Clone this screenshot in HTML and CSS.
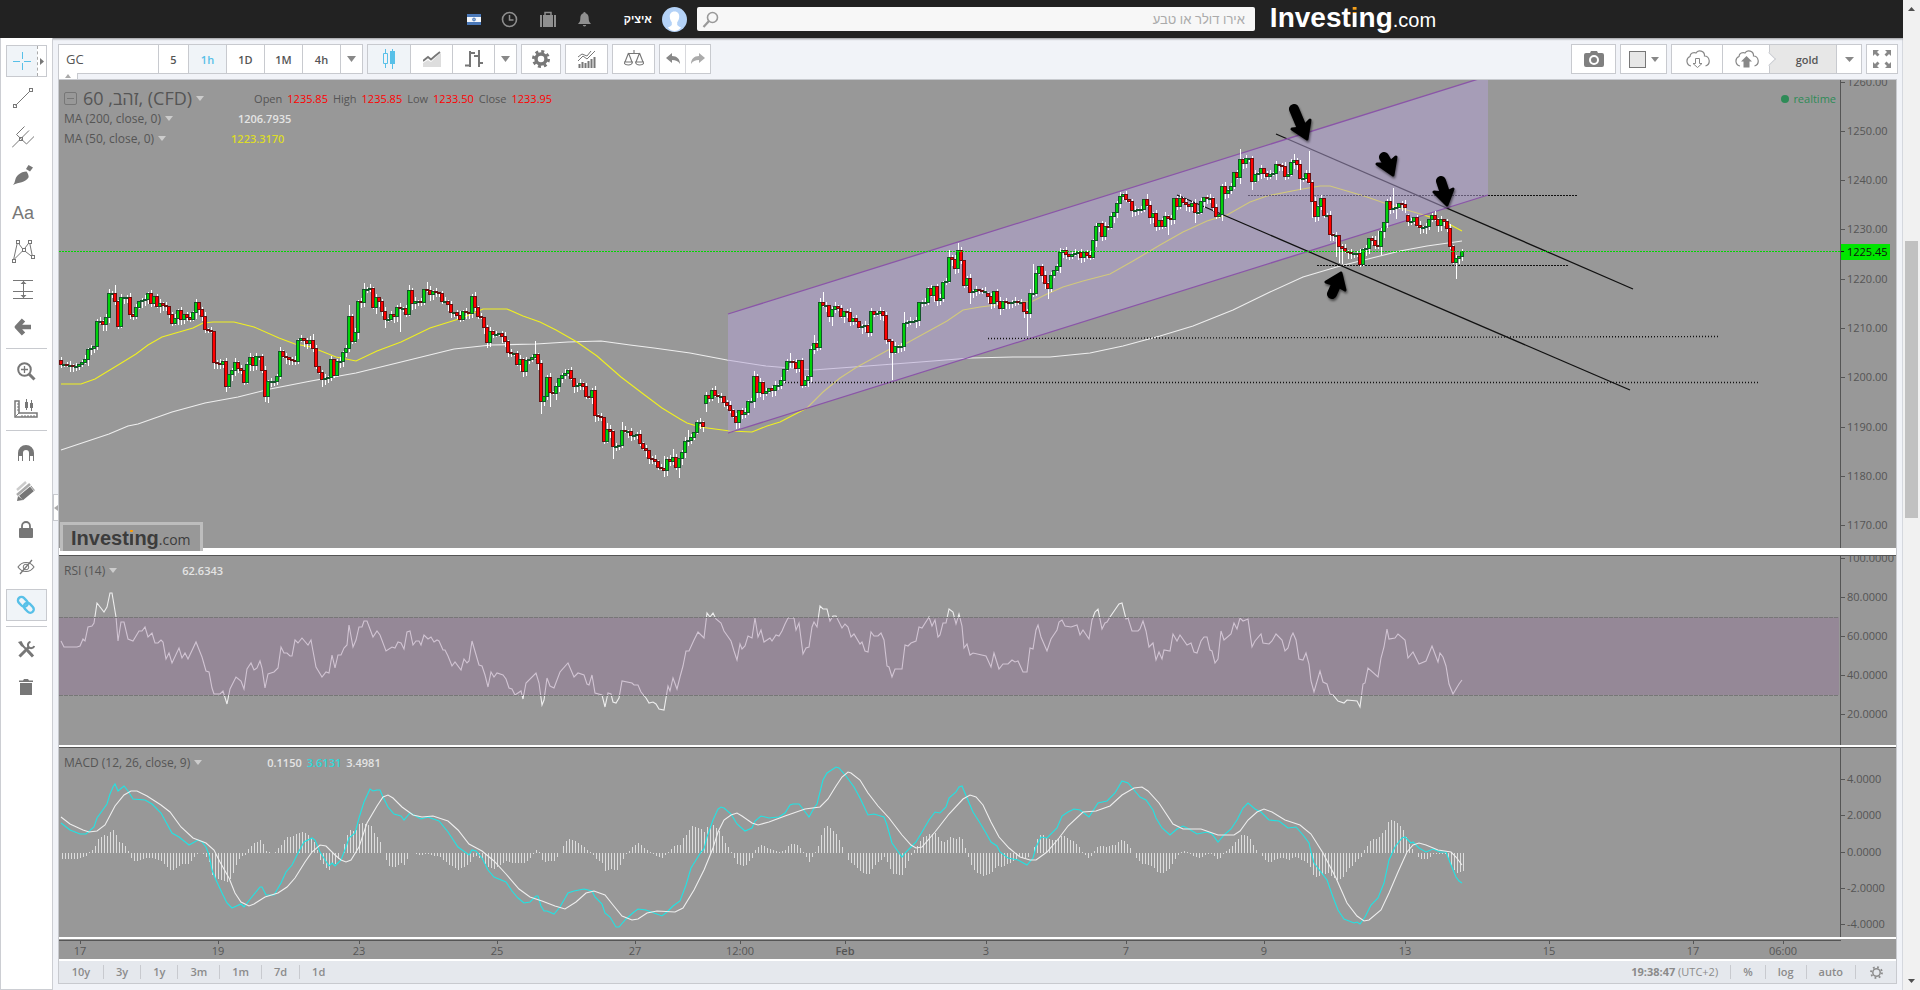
FILE: index.html
```html
<!DOCTYPE html>
<html lang="he">
<head>
  <meta charset="UTF-8">
  <meta name="viewport" content="width=device-width, initial-scale=1.0">
  <title>Investing.com - זהב</title>
  <link rel="stylesheet" href="styles.css">
</head>
<body>
  <div class="page">

    <!-- top bar -->
    <header class="topbar">
      <svg class="flag" width="14" height="11" viewBox="0 0 14 11"><rect width="14" height="11" fill="#f4f7fb"/><rect width="14" height="3" fill="#4a78b8"/><rect y="8" width="14" height="3" fill="#4a78b8"/><path d="M7 3.6l1.6 2.7H5.4zM7 7.4L5.4 4.7h3.2z" fill="none" stroke="#4a78b8" stroke-width=".7"/></svg>
      <a href="#" class="top-icon" aria-label="history"><svg width="17" height="17" viewBox="0 0 17 17"><circle cx="8.500" cy="8.500" r="7" fill="none" stroke="#8f8f8f" stroke-width="1.600"/><path d="M8.500 4v5h4" fill="none" stroke="#8f8f8f" stroke-width="1.500"/></svg></a>
      <a href="#" class="top-icon" aria-label="portfolio"><svg width="18" height="17" viewBox="0 0 18 17"><path d="M6 4V1.500h6V4" fill="none" stroke="#8f8f8f" stroke-width="1.500"/><path d="M1 4h2v12H1zM4 4h10v12H4zM15 4h2v12h-2z" fill="#8f8f8f"/></svg></a>
      <a href="#" class="top-icon" aria-label="alerts"><svg width="15" height="16" viewBox="0 0 15 16"><path d="M7.500 1c-1 0-1.200.8-1.200 1.300C4 3 3.300 5 3.300 7.500c0 2.500-.8 4-2.300 5.500h13c-1.500-1.500-2.300-3-2.300-5.500 0-2.500-.7-4.500-3-5.200C8.700 1.800 8.500 1 7.500 1zM5.800 14h3.400a1.700 1.500 0 0 1-3.400 0z" fill="#8f8f8f"/></svg></a>
      <a href="#" class="user" dir="rtl">איציק</a>
      <svg class="avatar" width="25" height="25" viewBox="0 0 25 25"><circle cx="12.500" cy="12.500" r="12.500" fill="#b4d2f7"/><path d="M12.500 4.500c-3.500 0-5 2.500-4.700 5.500.2 2.500 1 4 2 5.200V18c-1.500 1.800-3 2-4 2.600 2 2.500 4.500 3.400 6.700 3.400s4.700-.9 6.700-3.400c-1-.6-2.500-.8-4-2.600v-2.800c1-1.200 1.800-2.700 2-5.200.3-3-1.200-5.500-4.700-5.500z" fill="#fff"/></svg>
      <form class="search">
        <svg width="17" height="17" viewBox="0 0 17 17"><circle cx="10.500" cy="6.500" r="5" fill="none" stroke="#999" stroke-width="1.600"/><path d="M7 10l-5.500 6" stroke="#999" stroke-width="2.200"/></svg>
        <input type="text" dir="rtl" aria-label="חיפוש" placeholder="אירו דולר או טבע">
      </form>
      <a href="#" class="logo"><b>Invest<span class="dot">i</span>ng</b><span class="com">.com</span></a>
    </header>

    <div class="workspace">

      <!-- drawing tools -->
      <nav class="tools">
        <button class="tool active split" aria-label="crosshair">
          <svg width="18" height="18" viewBox="0 0 18 18"><path d="M0 9.500h7M11 9.500h7M9.500 0v7M9.500 11v7" stroke="#58c0e8" fill="none"/></svg>
          <span class="more"><svg width="4" height="7" viewBox="0 0 4 7"><path d="M0 0l4 3.500L0 7z" fill="#777"/></svg></span>
        </button>
        <button class="tool" aria-label="trend line"><svg width="22" height="22" viewBox="0 0 22 22"><g fill="none" stroke="#777"><path d="M3.500 17.500l14-14"/><rect x="1.500" y="16.500" width="3" height="3"/><rect x="17.500" y=".5" width="3" height="3"/></g></svg></button>
        <button class="tool" aria-label="pitchfork"><svg width="22" height="22" viewBox="0 0 22 22"><g fill="none" stroke="#777"><path d="M0 21.500l7.500-7.500M10 11.500l7-7M4.500 8.500l8-8M4.500 8.500l10 9.500M14.500 18l8-8"/><rect x="7.500" y="11.500" width="3" height="3"/></g></svg></button>
        <button class="tool" aria-label="brush"><svg width="22" height="22" viewBox="0 0 22 22"><path d="M1 21c3-3 1-6 5-10 2.500-2.400 6-3.500 8.500-3.500 1.500 2 2.500 4.500 2 6C13 19 7 18 1 21z M14 5l2.500-4 4.500 2.500-3 4z" fill="#777"/></svg></button>
        <button class="tool text-tool" aria-label="text">Aa</button>
        <button class="tool" aria-label="pattern"><svg width="24" height="24" viewBox="0 0 24 24"><g fill="none" stroke="#777"><path d="M2.500 21l4-18 6 8 6-8 3 15-9-7-10 10"/></g><g fill="#fff" stroke="#777"><rect x="5.500" y="1.500" width="3" height="3"/><rect x="17.500" y="1.500" width="3" height="3"/><rect x="11.500" y="9.500" width="3" height="3"/><rect x="1.500" y="20.500" width="3" height="3"/><rect x="20.500" y="16.500" width="3" height="3"/></g></svg></button>
        <button class="tool" aria-label="price range"><svg width="20" height="20" viewBox="0 0 20 20"><path d="M0 1.500h20M0 12.500h20M0 19.500h20M10.500 2v17" stroke="#777" fill="none"/><path d="M10.500 2l3 3h-6zM10.500 19l3-3h-6z" fill="#777"/></svg></button>
        <button class="tool" aria-label="icons"><svg width="18" height="18" viewBox="0 0 18 18"><path d="M9.500 2L3 9l6.500 7M4 9h13" stroke="#777" stroke-width="4.600" fill="none" stroke-linejoin="round"/></svg></button>
        <hr>
        <button class="tool" aria-label="zoom in"><svg class="shift" width="19" height="19" viewBox="0 0 19 19"><circle cx="7.500" cy="7.500" r="6.300" fill="none" stroke="#777" stroke-width="2"/><path d="M4 7.500h7M7.500 4v7" stroke="#777" stroke-width="1.300"/><path d="M12 12l5.500 5.500" stroke="#777" stroke-width="3"/></svg></button>
        <button class="tool" aria-label="measure"><svg class="shift" width="24" height="20" viewBox="0 0 24 20"><path d="M1 2h4v12h18v4H1z" fill="none" stroke="#777" stroke-width="1.500"/><path d="M3 5h2M3 8h2M3 11h2M8 16v2M11 16v2M14 16v2M17 16v2M20 16v2M1.500 17.500L5 14M12.500 0v11M17.500 1v11" stroke="#777"/><path d="M11 3h3v6h-3zM16 4h3v5h-3z" fill="#777"/></svg></button>
        <hr>
        <button class="tool" aria-label="magnet"><svg class="shift" width="16" height="17" viewBox="0 0 16 17"><path d="M2.500 16V8a5.500 5.500 0 0 1 11 0v8" fill="none" stroke="#777" stroke-width="5"/><path d="M1 11h3v5H1zM12 11h3v5h-3z" fill="#fff"/></svg></button>
        <button class="tool" aria-label="stay in drawing mode"><svg class="shift" width="20" height="20" viewBox="0 0 20 20"><path d="M1 9l9-8" stroke="#ccc" stroke-width="2.500"/><path d="M1 14L14 3" stroke="#aaa" stroke-width="2.500"/><path d="M5 17L17 7" stroke="#777" stroke-width="6"/><path d="M1 20l1-5 5 4z" fill="#777"/><path d="M14 5l5 6" stroke="#fff" stroke-width=".8"/></svg></button>
        <button class="tool" aria-label="lock"><svg class="shift" width="14" height="17" viewBox="0 0 14 17"><path d="M3 8V5a4 4 0 0 1 8 0v3" fill="none" stroke="#777" stroke-width="1.800"/><rect y="7" width="14" height="10" rx="1" fill="#777"/></svg></button>
        <button class="tool" aria-label="hide drawings"><svg class="shift" width="18" height="16" viewBox="0 0 18 16"><path d="M1 8c4-6 12-6 16 0-4 6-12 6-16 0z" fill="none" stroke="#777" stroke-width="1.100"/><circle cx="9" cy="8" r="2.800" fill="none" stroke="#777"/><path d="M3 15L15 1" stroke="#777" stroke-width="1.300"/></svg></button>
        <button class="tool active" aria-label="link"><svg width="20" height="20" viewBox="0 0 20 20"><g fill="none" stroke="#58c0e8" stroke-width="2.400"><rect x="-5" y="-3.500" width="11" height="7" rx="3.500" transform="translate(6.500 6.500) rotate(45)"/><rect x="-5" y="-3.500" width="11" height="7" rx="3.500" transform="translate(12.500 12.500) rotate(45)"/></g></svg></button>
        <hr>
        <button class="tool" aria-label="settings"><svg class="shift" width="17" height="17" viewBox="0 0 17 17"><path d="M3 3l11.500 11.500" stroke="#777" stroke-width="2"/><path d="M9.500 9.500l5.500 6" stroke="#777" stroke-width="3"/><path d="M0 1l3.500-1 2.500 5-2.500.5z" fill="#777"/><path d="M1.500 15.500L11 6" stroke="#777" stroke-width="3"/><path d="M12.500.8a3.200 3.200 0 1 0 3.700 4.200" fill="none" stroke="#777" stroke-width="2"/></svg></button>
        <button class="tool" aria-label="remove"><svg class="shift" width="14" height="16" viewBox="0 0 14 16"><path d="M0 1.500h4L5 0h4l1 1.500h4V3H0zM1 4h12v12H1z" fill="#777"/></svg></button>
        <span class="fold-left"><svg width="4" height="6" viewBox="0 0 4 6"><path d="M4 0L0 3l4 3z" fill="#aaa"/></svg></span>
      </nav>

      <main class="main">
        <!-- chart toolbar -->
        <div class="toolbar">
          <div class="group">
            <input class="symbol" type="text" aria-label="symbol" value="GC">
            <button class="w31">5</button>
            <button class="on">1h</button>
            <button>1D</button>
            <button>1M</button>
            <button>4h</button>
            <button class="caret" aria-label="more intervals"><svg width="9" height="6" viewBox="0 0 9 6"><path d="M0 0h9L4.500 6z" fill="#888"/></svg></button>
          </div>
          <div class="group">
            <button class="on w42" aria-label="candles"><svg width="14" height="20" viewBox="0 0 14 20"><path d="M3.500 0v4M3.500 15v4M10.500 0v3M10.500 15v5" stroke="#58c0e8"/><path d="M1.500 4.500h4v10h-4z" stroke="#58c0e8" fill="none"/><path d="M8 2h5v13H8z" fill="#58c0e8"/></svg></button>
            <button class="w42" aria-label="area"><svg width="18" height="16" viewBox="0 0 18 16"><path d="M0 12l5-3 3 2 6-6 4-3v14H0z" fill="#ddd"/><path d="M0 10l5-4 3 2.500L12 5l5-4" fill="none" stroke="#777" stroke-width="1.800"/></svg></button>
            <button class="w42" aria-label="bars"><svg width="18" height="18" viewBox="0 0 18 18"><path d="M0 15.500h4M5 1v16M5 3h5M9 6h4M14 0v17M14 13h4" fill="none" stroke="#777" stroke-width="2"/></svg></button>
            <button class="caret" aria-label="more styles"><svg width="9" height="6" viewBox="0 0 9 6"><path d="M0 0h9L4.500 6z" fill="#888"/></svg></button>
          </div>
          <div class="group"><button aria-label="properties"><svg width="18" height="18" viewBox="0 0 18 18"><circle cx="9" cy="9" r="5" fill="none" stroke="#777" stroke-width="3.500"/><circle cx="9" cy="9" r="7.600" fill="none" stroke="#777" stroke-width="2.800" stroke-dasharray="3 2.970"/></svg></button></div>
          <div class="group"><button class="w41" aria-label="indicators"><svg width="18" height="18" viewBox="0 0 18 18"><path d="M1.500 18v-4M4.500 18v-6M7.500 18v-5M10.500 18v-7M13.500 18V9M16.500 18V7" stroke="#777" stroke-width="2"/><path d="M0 11l5-5 4 3 8-8M0 7l4-3 5 2 4-5" fill="none" stroke="#777"/></svg></button></div>
          <div class="group"><button class="w41" aria-label="compare"><svg width="20" height="18" viewBox="0 0 20 18"><path d="M4 3.500h12M10 0v4M4.500 3L1 12M4.500 3L8 12M15.500 3L12 12M15.500 3L19 12M0 12h8.500c-.5 4-8 4-8.500 0zM11.500 12H20c-.5 4-8 4-8.500 0z" fill="none" stroke="#777" stroke-width="1.100"/></svg></button></div>
          <div class="group">
            <button class="w25" aria-label="undo"><svg width="14" height="12" viewBox="0 0 14 12"><path d="M6 0v3c5 0 8 3 8 8-2-3-4-4-8-4v3L0 5z" fill="#888"/></svg></button>
            <button class="w25 faded" aria-label="redo"><svg width="14" height="12" viewBox="0 0 14 12"><path d="M8 0v3C3 3 0 6 0 11c2-3 4-4 8-4v3l6-5z" fill="#888"/></svg></button>
          </div>

          <div class="spacer"></div>

          <div class="group"><button class="w43" aria-label="snapshot"><svg width="20" height="16" viewBox="0 0 20 16"><path d="M2 2h4l1-2h6l1 2h4q2 0 2 2v10q0 2-2 2H2q-2 0-2-2V4q0-2 2-2z" fill="#808080"/><circle cx="10" cy="9" r="4" fill="none" stroke="#fff" stroke-width="2"/></svg></button></div>
          <div class="group"><button class="w45" aria-label="background"><span class="swatch"></span><svg width="8" height="5" viewBox="0 0 8 5"><path d="M0 0h8L4 5z" fill="#888"/></svg></button></div>
          <div class="group">
            <button class="w50" aria-label="load"><svg width="27" height="18" viewBox="0 0 27 18"><path d="M7 16a5 5 0 0 1-1-9.500C6 3 10 2 12 3c2-4 9-2 8.500 3 5 0 7 8 1 10" fill="none" stroke="#888" stroke-width="1.200"/><path d="M11.500 8.500h4v5h2.500l-4.500 4-4.500-4h2.500z" fill="#fff" stroke="#888"/></svg></button>
            <button class="w47 save" aria-label="save"><svg width="27" height="18" viewBox="0 0 27 18"><path d="M7 16a5 5 0 0 1-1-9.500C6 3 10 2 12 3c2-4 9-2 8.500 3 5 0 7 8 1 10" fill="none" stroke="#888" stroke-width="1.200"/><path d="M10.500 17.500v-6H8L13.500 6l5.500 5.500h-2.500v6z" fill="#888"/></svg></button>
            <button class="layout">gold</button>
            <button class="w25" aria-label="more layouts"><svg width="9" height="5" viewBox="0 0 9 5"><path d="M0 0h9L4.500 5z" fill="#888"/></svg></button>
          </div>
          <div class="group"><button class="w31" aria-label="full screen"><svg width="18" height="18" viewBox="0 0 18 18"><g fill="#888"><path d="M0 0h6L4 2l2.500 2.500-2 2L2 4 0 6zM18 0v6l-2-2-2.500 2.500-2-2L14 2l-2-2zM0 18v-6l2 2 2.500-2.500 2 2L4 16l2 2zM18 18h-6l2-2-2.500-2.500 2-2L16 14l2-2z"/></g></svg></button></div>
          <span class="fold-up"><svg width="6" height="4" viewBox="0 0 6 4"><path d="M0 4l3-4 3 4z" fill="#aaa"/></svg></span>
        </div>

        <!-- chart panes -->
        <div class="chart">
          <section class="pane price">
            <svg class="plot" id="pricePlot"></svg>
            <svg class="axis" id="priceAxis"></svg>
            <div class="legend">
              <div class="row title">
                <span class="minus"></span><span class="name">זהב, 60, (CFD)</span><i class="tri"></i>
                <dl>
                  <dt>Open</dt><dd>1235.85</dd>
                  <dt>High</dt><dd>1235.85</dd>
                  <dt>Low</dt><dd>1233.50</dd>
                  <dt>Close</dt><dd>1233.95</dd>
                </dl>
              </div>
              <div class="row"><span class="study-name">MA (200, close, 0)</span><i class="tri"></i><b>1206.7935</b></div>
              <div class="row"><span class="study-name">MA (50, close, 0)</span><i class="tri"></i><b class="yellow">1223.3170</b></div>
            </div>
            <div class="realtime">realtime</div>
            <div class="watermark"><b>Invest<span class="dot">i</span>ng</b><span class="com">.com</span></div>
          </section>
          <section class="pane study">
            <svg class="plot" id="rsiPlot"></svg>
            <svg class="axis" id="rsiAxis"></svg>
            <div class="legend"><div class="row"><span class="study-name">RSI (14)</span><i class="tri"></i><b>62.6343</b></div></div>
          </section>
          <section class="pane study">
            <svg class="plot" id="macdPlot"></svg>
            <svg class="axis" id="macdAxis"></svg>
            <div class="legend"><div class="row"><span class="study-name">MACD (12, 26, close, 9)</span><i class="tri"></i><b>0.1150</b><b class="cyan">3.6131</b><b>3.4981</b></div></div>
          </section>
          <svg class="times" id="timeAxis"></svg>
          <footer class="ranges">
            <button>10y</button><button>3y</button><button>1y</button><button>3m</button><button>1m</button><button>7d</button><button>1d</button>
            <div class="spacer"></div>
            <span class="clock"><b>19:38:47</b> (UTC+2)</span>
            <button>%</button><button>log</button><button>auto</button>
            <button aria-label="scale settings"><svg width="13" height="13" viewBox="0 0 13 13"><circle cx="6.500" cy="6.500" r="3.700" fill="none" stroke="#8b8b8b" stroke-width="1.500"/><circle cx="6.500" cy="6.500" r="5.500" fill="none" stroke="#8b8b8b" stroke-width="1.800" stroke-dasharray="1.800 2.520"/></svg></button>
          </footer>
        </div>
      </main>
    </div>
  </div>

  <div class="scrollbar">
    <svg width="7" height="4" viewBox="0 0 7 4"><path d="M0 4l3.500-4L7 4z" fill="#505050"/></svg>
    <div class="thumb"></div>
    <svg width="7" height="4" viewBox="0 0 7 4"><path d="M0 0h7L3.500 4z" fill="#505050"/></svg>
  </div>

  <script src="chart.js"></script>
</body>
</html>
```
FILE: styles.css
```css
* {
  box-sizing: border-box;
}

body {
  margin: 0;
  display: flex;
  min-height: 100vh;
  background: #f1f3f8;
  font-family: "Trebuchet MS", "Open Sans", "Liberation Sans", sans-serif;
  font-size: 11px;
  color: #555;
}

button {
  margin: 0;
  padding: 0;
  border: 0;
  background: none;
  font: inherit;
  color: inherit;
  display: flex;
  align-items: center;
  justify-content: center;
  cursor: pointer;
}

a {
  text-decoration: none;
}

.page {
  flex: 1;
  min-width: 0;
  display: flex;
  flex-direction: column;
  border-right: 1px solid #d5d8de;
}

.spacer {
  flex: 1;
}

/* top bar */
.topbar {
  height: 38px;
  margin-right: -1px;
  background: #222;
  display: flex;
  align-items: center;
  justify-content: center;
  box-shadow: 0 1px 2px rgba(0, 0, 0, 0.4);
  font-family: "Liberation Sans", sans-serif;
}
.topbar svg {
  display: block;
}
.flag {
  margin-right: 20px;
}
.top-icon {
  width: 38px;
}
.user {
  width: 47px;
  padding-right: 10px;
  text-align: right;
  color: #fff;
  font-size: 11px;
  font-weight: bold;
}
.avatar {
  margin-right: 10px;
}
.search {
  width: 558px;
  height: 24px;
  padding: 0 10px 0 5px;
  display: flex;
  align-items: center;
  background: #f7f7f7;
  border-radius: 2px;
}
.search input {
  flex: 1;
  min-width: 0;
  border: 0;
  padding: 0;
  background: none;
  font: 13px "Liberation Sans", sans-serif;
  outline: none;
}
.search input::placeholder {
  color: #aaa;
}
.logo {
  margin-left: 15px;
  color: #fff;
  font-size: 28px;
  line-height: 38px;
  white-space: nowrap;
}
.logo b,
.watermark b {
  font-family: "Liberation Sans", sans-serif;
}
.logo .com {
  font-size: 20px;
}
.dot {
  background: linear-gradient(#f7a11a 34%, #fff 34%);
  background-clip: text;
  -webkit-background-clip: text;
  color: transparent;
}

.workspace {
  flex: 1;
  display: flex;
}

/* drawing tools */
.tools {
  position: relative;
  width: 53px;
  padding: 4px 5px;
  display: flex;
  flex-direction: column;
  background: #fff;
  border: 1px solid #ccced3;
  border-top: 0;
}
.tool {
  width: 41px;
  height: 32px;
  margin: 3px 0;
  padding-right: 7px;
}
.tool.active {
  background: #f0f4f8;
  border: 1px solid #c8cacf;
  padding-right: 1px;
}
.tool.split {
  padding: 0;
}
.tool.split > svg {
  flex: none;
  margin: 0 6px;
}
.more {
  flex: 1;
  height: 30px;
  background: #fff;
  border-left: 1px dashed #aaa;
  display: flex;
  align-items: center;
  justify-content: center;
}
.shift {
  margin-left: 6px;
}
.text-tool {
  font: 18px "Liberation Sans", sans-serif;
  color: #777;
}
.tools hr {
  width: 100%;
  margin: 2px 0 3px;
  border: 0;
  border-top: 1px solid #c8cacf;
}
.fold-left {
  position: absolute;
  left: 52px;
  top: 456px;
  width: 6px;
  height: 27px;
  background: #fff;
  border: 1px solid #c8cacf;
  display: flex;
  align-items: center;
}

/* chart toolbar */
.main {
  flex: 1;
  min-width: 0;
  margin-left: 5px;
  display: flex;
  flex-direction: column;
}
.toolbar {
  position: relative;
  display: flex;
  gap: 4px;
  padding: 6px 4px 5px 0;
  font-weight: 600;
}
.group {
  height: 30px;
  display: flex;
  background: #fff;
  border: 1px solid #c8cacf;
}
.group > * + * {
  border-left: 1px solid #c8cacf;
}
.group button {
  width: 38px;
}
.group .symbol {
  width: 99px;
  border: 0;
  padding: 0 7px;
  font: 13px "Trebuchet MS", "Open Sans", sans-serif;
  color: #555;
}
.group .on {
  background: #f0f4f8;
  color: #58c0e8;
}
.group .caret {
  width: 22px;
}
.group .w25 {
  width: 25px;
}
.group .w31 {
  width: 30px;
}
.group .w41 {
  width: 41px;
}
.group .w42 {
  width: 42px;
}
.group .w43 {
  width: 43px;
}
.group .w45 {
  width: 45px;
  gap: 5px;
}
.group .w50 {
  width: 50px;
}
.group .w47 {
  width: 47px;
}
.group .layout {
  width: 67px;
  padding-left: 8px;
  background: #e7e7e7;
}
.save {
  position: relative;
}
/* notch pointing at the layout name */
.save::after {
  content: "";
  position: absolute;
  right: -5px;
  top: 9px;
  width: 9px;
  height: 9px;
  background: #fff;
  border: solid #c8cacf;
  border-width: 1px 1px 0 0;
  transform: rotate(45deg);
}
.faded {
  opacity: 0.7;
}
.swatch {
  width: 17px;
  height: 17px;
  background: #e7e7e7;
  border: 1px solid #777;
}
.fold-up {
  position: absolute;
  left: 0;
  bottom: 0;
  width: 20px;
  height: 6px;
  background: #fff;
  border-right: 1px solid #c8cacf;
  border-left: 1px solid #c8cacf;
  display: flex;
  align-items: center;
  justify-content: center;
}

/* chart */
.chart {
  margin: 0 5px 5px 0;
  border: 1px solid #c8cacf;
  background: #fff;
}
.chart svg {
  display: block;
}
.pane {
  position: relative;
  display: flex;
  background: #989898;
}
.plot {
  flex: 1;
  min-width: 0;
  height: 100%;
}
.axis {
  width: 56px;
  height: 100%;
  border-left: 1px solid #555;
}
.price {
  height: 468px;
  margin-bottom: 7px;
}
.study {
  height: 190px;
  margin-bottom: 2px;
  border-top: 1px solid #555;
}
.times {
  width: 100%;
  height: 20px;
  background: #989898;
}
.chart text {
  font: 11px "Trebuchet MS", "Open Sans", sans-serif;
  fill: #555;
}

.legend {
  position: absolute;
  left: 5px;
  top: 4px;
  white-space: nowrap;
}
.price .legend {
  top: 8px;
}
.row {
  height: 20px;
  display: flex;
  align-items: center;
}
.title .name {
  font-family: "Trebuchet MS", "Open Sans", "DejaVu Sans", sans-serif;
  font-size: 18px;
  line-height: 20px;
}
.study-name {
  font-size: 12px;
}
.minus {
  width: 13px;
  height: 13px;
  margin-right: 6px;
  padding: 5px 2px;
  background: linear-gradient(#777, #777) content-box;
  border: 1px solid #777;
  border-radius: 2px;
}
.tri {
  margin: 0 65px 0 4px;
  border: solid transparent;
  border-width: 5px 4px 0;
  border-top-color: #ccc;
}
.title .tri {
  margin-right: 50px;
}
.row b {
  margin-right: 5px;
  color: #e4e4e4;
  font-weight: 600;
}
.row .yellow {
  color: #dcdc28;
}
.row .cyan {
  color: #30d8d8;
}
dl,
dd {
  margin: 0;
}
dl {
  display: flex;
}
dt {
  margin-right: 5px;
}
dd {
  margin-right: 5px;
  color: #f00;
}
.realtime {
  position: absolute;
  right: 60px;
  top: 11px;
  color: #2e8b57;
  display: flex;
  align-items: center;
}
.realtime::before {
  content: "";
  width: 8px;
  height: 8px;
  margin-right: 4px;
  border-radius: 50%;
  background: #2e8b57;
}
.watermark {
  position: absolute;
  left: 1px;
  top: 442px;
  width: 143px;
  height: 29px;
  padding-left: 8px;
  line-height: 25px;
  background: #989898;
  border: 3px solid #bdbdbd;
  border-bottom: 0;
  color: #3c3c3c;
  font-size: 20px;
}
.watermark .com {
  font-size: 14px;
}
.watermark .dot {
  background-image: linear-gradient(#ff9d00 32%, #3c3c3c 32%);
}

/* bottom bar */
.ranges {
  height: 22px;
  margin-top: 2px;
  display: flex;
  align-items: center;
  background: #e5e8ed;
  color: #8b8b8b;
}
.ranges > * {
  height: 14px;
  padding: 0 12px;
  line-height: 14px;
}
.ranges button {
  min-width: 37px;
  font-weight: 600;
}
.ranges button + button,
.clock + button {
  border-left: 1px solid #c8cacf;
}
.ranges button:first-child {
  min-width: 44px;
}
.ranges .clock + button {
  min-width: 34px;
}
.ranges button:last-child {
  min-width: 41px;
}

/* page scrollbar */
.scrollbar {
  width: 17px;
  padding: 7px 2px;
  background: #f1f1f1;
  display: flex;
  flex-direction: column;
  align-items: center;
}
.thumb {
  flex: 0 0 auto;
  width: 13px;
  height: 28vh;
  margin: 230px 0 auto;
  background: #c1c1c1;
}
```
FILE: chart.js
```js
const NS = 'http://www.w3.org/2000/svg';
const LEFT = 59;   // x of the first plot column
const STEP = 3;    // px per bar
const FIRST = 62;  // x of the first bar

function add(parent, tag, attrs, text) {
  const el = document.createElementNS(NS, tag);
  for (const k in attrs) el.setAttribute(k, attrs[k]);
  if (text !== undefined) el.textContent = text;
  parent.appendChild(el);
  return el;
}

// every plot shares one coordinate system, top is the y of the pane
function plot(id, top) {
  return add(document.getElementById(id), 'g', { transform: `translate(${-LEFT},${-top})` });
}

function parse(s) {
  return s.trim().split(/\s+/).map(p => p.split(',').map(Number));
}

function line(g, s, color) {
  return add(g, 'polyline', { points: s.trim(), fill: 'none', stroke: color, 'stroke-width': 1.1 });
}

function valueAt(pts, x) {
  for (let i = 1; i < pts.length; i++) {
    if (x <= pts[i][0]) {
      const [x0, y0] = pts[i - 1], [x1, y1] = pts[i];
      return y0 + (y1 - y0) * (x - x0) / (x1 - x0);
    }
  }
  return pts[pts.length - 1][1];
}

function axis(id, top, labels) {
  const svg = document.getElementById(id);
  labels.forEach(([y, text]) => {
    add(svg, 'path', { d: `M0 ${y - top + .5}h4`, stroke: '#555' });
    add(svg, 'text', { x: 6, y: y - top + 4 }, text);
  });
}

/* ---- data: x,close[,open] ---- */
const closes = parse(`
62,365,361 65,365 68,366 72,366 75,367 78,367 82,363 87,360 90,350 93,349 96,347 98,322 101,322 105,325 108,318 111,294 114,294 117,302 120,327 123,298 127,298 130,315 134,317
138,308 141,302 146,300 149,294 152,304 155,297 158,307 161,304 166,307 168,320 171,315 174,324 179,311 183,320 185,315 191,320 194,313 198,303 201,310 204,317
207,330 211,332 213,353 216,363 222,365 225,362 228,387 231,375 237,363 240,369 243,371 246,383 249,365 252,358 255,366 258,357 261,357 264,371 267,397 270,382
276,382 279,377 282,352 285,357 291,360 295,362 297,342 303,339 309,344 312,341 315,349 318,367 321,373 324,380 330,378 333,360 336,376 339,362 342,362 345,353
348,349 351,317 354,342 357,333 360,302 363,303 366,290 370,289 372,297 375,308 378,298 381,302 384,312 387,320 390,320 393,315 396,317 399,308 403,309 406,315
408,293 411,291 414,304 417,302 423,303 426,290 429,291 432,295 435,292 441,294 444,302 447,302 450,305 453,313 456,313 461,320 465,312 470,314 473,297 477,308
480,317 483,318 486,328 489,343 492,332 495,335 499,334 504,337 507,342 510,353 514,354 516,362 519,365 522,360 525,372 528,361 534,358 537,355 540,364 543,402
546,397 549,378 552,393 555,394 558,387 561,379 564,376 570,371 573,379 576,387 581,384 585,387 588,397 591,398 594,391 597,416 603,418 606,442 609,430 612,432
615,447 618,447 621,446 624,431 628,432 633,436 638,435 642,444 645,449 648,451 651,459 657,462 660,468 666,471 669,460 672,462 675,458 678,468 681,459 684,453
687,442 690,441 695,433 698,423 701,423 704,427 707,396,404 710,399 713,391 716,396 722,397 725,403 728,406 731,411 734,417 738,423 741,411 744,415 747,413 750,402
753,402 756,377 759,393 762,383 765,394 771,389 774,391 777,386 780,386 783,381 786,370 789,362 795,363 798,369 801,361 804,386 807,381 810,377 813,350 816,344
819,348 822,303 825,306 828,306 831,317 834,310 837,307 840,309 843,317 846,312 849,313 852,322 855,319 858,322 861,328 865,326 868,333 870,333 873,312 876,315
881,312 884,316 887,340 891,342 894,353 897,347 902,347 906,324 910,322 918,321 921,303 926,303 929,289 932,296 935,287 938,301 942,299 945,283 948,282 951,258
954,260 957,269 960,251 963,261 966,286 969,279 972,293 977,290 982,292 987,292 990,297,294 993,304 996,292 999,302 1002,309 1005,302 1010,304 1016,302 1022,303
1025,312 1028,314 1031,294 1034,294 1037,274 1040,267 1043,276 1046,284 1049,289 1052,276 1055,271 1058,267 1061,253 1064,251 1067,255 1070,257 1075,254 1079,253
1082,258 1085,253 1091,258 1094,241 1097,227 1100,224 1103,237 1106,227 1109,228 1112,217 1115,213 1118,204 1121,197 1124,195 1127,200 1130,202 1133,211 1139,210
1142,210 1145,200 1148,206 1151,218 1154,214 1157,227 1160,221 1163,227 1166,217 1172,220 1175,199 1178,207 1181,199 1185,203 1189,207 1193,204 1196,213 1199,213
1202,202 1205,198 1210,199 1212,208 1215,208 1218,217 1221,215 1223,187 1226,194 1229,191 1232,187 1235,173 1238,178 1241,160 1244,164 1247,159 1250,159 1253,182
1256,175 1259,174 1262,169 1265,174 1268,177 1273,174 1276,165 1283,167 1286,177 1289,175 1292,163 1295,161 1298,165 1301,179 1304,179 1307,174 1310,183 1313,202
1316,217 1319,207 1322,199 1325,216 1328,216 1331,235 1336,236 1338,241 1341,247 1344,249 1347,252 1352,254 1359,254 1361,265 1364,250 1367,249 1370,239 1373,241
1376,246 1379,247 1382,232 1385,223 1388,202 1391,210 1397,208 1400,204 1403,205 1406,208 1409,222,216 1412,222 1415,218 1418,226 1421,228 1427,227 1430,220 1433,216
1436,220 1439,226 1442,220 1445,222 1448,229 1451,247 1454,263 1457,259 1460,257 1463,252`);

// long wicks: bar x -> y reached
const spikes = {
  98: 320, 104: 331, 117: 285, 111: 289, 228: 392, 267: 402, 270: 401, 315: 334, 324: 387, 351: 305, 366: 283, 387: 328, 402: 332, 411: 285, 429: 282, 477: 292,
  537: 341, 543: 414, 552: 407, 597: 422, 609: 423, 615: 459, 624: 422, 666: 456, 675: 449, 681: 478, 690: 430, 708: 412, 738: 427, 756: 371, 765: 400, 792: 353,
  816: 335, 825: 292, 834: 326, 885: 312, 891: 358, 894: 380, 906: 312, 951: 250, 960: 243, 972: 304, 1002: 315, 1029: 336, 1035: 264, 1050: 299, 1122: 193,
  1149: 194, 1158: 229, 1170: 235, 1197: 223, 1242: 149, 1254: 190, 1296: 154, 1302: 190, 1311: 151, 1314: 218, 1338: 257, 1341: 263, 1344: 264, 1362: 267,
  1380: 231, 1383: 255, 1395: 188, 1398: 219, 1428: 234, 1458: 279, 1323: 195
};

const ma200 = `61,450 79,444 109,434 128,426 138,424 172,412 205,403 238,397 270,389 311,381 356,373 397,363 454,349 491,345 536,344 568,342 601,341 630,345 654,348
690,353 727,360 766,366 813,370 867,366 907,363 933,361 970,358 1013,357 1050,357 1090,353 1123,346 1160,336 1193,326 1233,310 1270,292 1303,277 1340,266 1360,261
1380,256 1400,251 1427,246 1462,241`;
const ma50 = `61,384 81,384 95,379 123,362 136,354 148,345 162,337 193,328 203,323 213,322 234,322 254,327 279,338 295,344 311,347 336,357 356,361 377,351 401,342 430,328
462,318 483,309 507,309 523,316 540,322 556,330 577,342 597,356 621,377 642,393 662,408 680,419 687,423 700,427 730,431 752,432 767,426 780,422 807,408 823,392
840,378 857,367 890,349 907,343 927,332 947,321 963,310 980,307 1013,303 1033,301 1047,294 1063,287 1083,281 1110,274 1133,261 1160,245 1183,232 1207,221 1227,215
1250,202 1267,196 1297,190 1320,186 1330,186 1347,191 1367,197 1390,205 1427,216 1447,223 1462,231`;

const rsi = `61,641 64,647 77,647 80,646 83,639 85,641 88,627 92,626 94,623 97,603 104,612 107,607 110,593 112,593 116,617 118,641 121,622 124,622 128,639 133,641 139,631
142,631 145,627 148,637 152,633 155,643 158,643 161,640 163,642 166,659 169,653 172,663 179,648 182,658 185,653 188,659 196,642 202,657 206,671 209,672 212,688
214,694 220,694 223,691 227,704 230,689 236,677 241,681 244,689 247,669 251,663 254,670 257,668 260,661 262,668 265,688 268,674 274,672 278,668 281,647 284,653
287,653 290,656 292,656 295,640 298,643 302,638 308,645 311,640 313,651 316,667 322,677 326,672 329,673 332,655 335,668 338,655 341,655 344,648 347,645 349,625
353,647 356,640 359,627 362,627 364,621 367,621 373,637 377,631 380,635 386,651 392,647 395,648 398,642 401,643 404,649 407,632 410,631 413,645 416,641 419,641
421,645 424,635 428,639 431,637 434,642 437,640 439,641 443,650 445,650 448,656 452,666 455,662 461,670 464,659 467,663 469,661 472,641 479,665 482,666 485,675
488,687 491,672 494,677 497,673 503,675 506,679 509,688 512,689 515,695 521,691 523,699 526,683 536,673 539,683 542,705 544,700 547,678 550,686 554,688 560,672
568,663 574,677 578,673 584,675 587,684 589,685 592,675 595,693 602,695 605,707 608,693 611,694 613,702 616,703 619,698 622,681 632,683 634,685 638,685 641,692
646,698 649,703 653,702 656,704 659,709 664,710 668,686 670,691 673,678 677,689 680,677 683,666 686,651 689,651 694,640 698,632 704,638 707,613 710,617 713,613
716,619 721,623 724,631 731,641 734,651 737,660 740,644 742,649 745,646 748,636 752,638 755,618 758,637 761,630 764,642 770,638 772,641 776,635 779,636 782,631
785,624 788,618 794,618 796,630 799,623 803,654 806,648 809,647 812,627 814,622 817,627 820,606 823,609 827,609 830,621 833,616 836,616 842,628 845,624 848,627
851,637 854,634 860,644 862,642 865,651 868,652 871,632 874,636 878,636 881,633 884,640 887,666 889,667 892,677 895,669 902,669 905,645 908,646 911,643 916,641
919,627 922,628 929,617 932,626 935,620 938,637 940,635 943,623 946,623 949,609 953,612 956,624 959,614 962,626 964,648 967,644 970,655 973,653 986,656 991,667
994,653 999,669 1003,664 1008,664 1012,660 1015,662 1018,661 1023,672 1027,672 1030,648 1033,649 1036,630 1038,625 1041,637 1047,651 1051,639 1057,630 1059,622
1062,620 1065,626 1071,627 1077,625 1080,635 1083,630 1089,639 1092,620 1095,612 1098,609 1102,629 1105,623 1107,622 1110,617 1119,604 1122,603 1126,619 1128,618
1132,631 1138,631 1140,629 1143,621 1146,631 1149,647 1153,643 1156,660 1159,652 1162,659 1164,650 1170,651 1173,634 1177,641 1180,635 1187,645 1191,643 1194,652
1197,653 1201,641 1204,637 1207,637 1210,650 1212,651 1215,663 1218,659 1221,631 1224,640 1231,634 1234,623 1237,629 1240,618 1243,621 1248,619 1252,647 1255,641
1261,634 1263,643 1269,644 1272,641 1276,634 1282,640 1285,651 1288,648 1291,637 1293,633 1296,640 1299,659 1303,660 1306,653 1309,664 1311,681 1314,692 1320,671
1323,682 1327,684 1330,694 1333,695 1338,701 1344,703 1347,700 1357,701 1360,707 1363,684 1365,683 1368,668 1378,677 1381,658 1384,647 1387,629 1389,639 1395,638
1398,634 1405,640 1408,658 1413,652 1419,664 1426,661 1432,646 1438,662 1440,653 1443,657 1446,666 1449,684 1453,694 1459,684 1462,680`;

const macd = `61,823 70,830 80,834 86,834 94,827 97,818 107,804 110,794 113,787 115,784 118,791 124,786 128,791 133,799 145,800 152,804 161,813 172,833 179,837 189,845
198,840 202,842 206,847 209,855 212,870 216,880 223,895 227,903 232,908 241,904 244,907 251,898 260,887 262,887 266,895 274,895 281,883 286,872 292,865 298,853
304,842 312,838 315,840 320,852 329,866 332,863 335,866 341,860 346,847 349,838 355,833 359,818 364,802 370,789 373,791 377,790 380,790 383,797 388,807 394,814
401,816 404,820 410,813 421,819 428,817 439,821 448,832 458,847 469,855 472,850 476,851 482,858 488,870 494,877 506,882 512,891 518,898 524,903 530,902 536,896
538,896 541,906 544,911 547,911 554,914 560,907 568,893 574,891 584,889 592,891 595,897 602,904 605,913 610,917 616,927 619,927 626,919 634,912 638,909 646,910
662,916 667,912 673,906 680,901 686,885 691,868 701,852 704,849 707,837 713,820 718,809 721,807 724,808 731,814 737,824 745,831 752,828 755,821 761,816 769,818
779,817 785,813 790,805 793,804 799,804 803,809 809,817 814,808 817,804 823,780 827,773 836,767 839,768 846,776 854,787 860,798 868,815 874,814 884,817 887,825
892,843 902,857 905,853 911,847 916,842 922,832 929,820 935,812 940,813 946,807 949,798 956,792 959,787 962,786 967,798 973,812 980,823 986,833 991,842 997,846
1000,852 1008,858 1018,860 1027,865 1033,858 1036,847 1041,837 1047,838 1057,828 1062,816 1068,812 1074,809 1080,810 1089,817 1098,803 1107,801 1115,793 1122,781
1128,783 1134,790 1140,797 1146,800 1153,810 1156,818 1162,828 1170,835 1177,829 1183,826 1189,829 1197,834 1207,832 1212,834 1218,842 1224,835 1231,829 1237,820
1243,808 1248,803 1255,809 1261,812 1269,820 1279,821 1288,828 1296,827 1303,835 1309,843 1311,852 1314,863 1327,880 1333,897 1338,910 1344,919 1354,923 1357,922
1360,924 1365,917 1371,905 1378,898 1384,883 1389,860 1395,847 1402,838 1405,837 1411,843 1413,842 1419,848 1426,852 1433,849 1440,852 1446,852 1449,860 1456,877
1459,881 1462,883`;
const signal = `61,817 70,824 83,830 89,832 97,831 105,825 115,806 124,795 131,791 137,791 147,796 161,805 170,812 181,827 193,838 206,843 214,850 220,862 229,878 235,893
241,902 249,906 254,904 265,897 278,893 287,887 295,878 305,862 312,852 320,845 326,846 335,855 341,860 346,862 351,860 359,847 367,823 377,806 383,797 388,795
393,798 402,807 413,815 422,817 433,816 448,821 458,830 469,844 482,851 494,861 506,874 519,889 530,897 542,901 555,906 565,909 576,902 586,893 594,891 605,895
613,905 622,916 632,920 638,919 647,913 657,911 675,912 683,908 694,890 704,870 713,848 718,832 724,820 731,815 737,813 742,816 752,823 758,825 769,822 785,816
805,809 820,807 828,799 836,786 842,777 848,772 851,773 860,780 868,793 878,806 889,818 902,835 911,845 916,848 922,847 935,832 949,814 963,799 970,795 976,797
983,805 991,822 999,837 1009,848 1020,857 1030,860 1036,860 1047,852 1059,838 1068,826 1083,812 1096,811 1110,806 1122,795 1134,788 1142,787 1148,791 1159,803
1173,824 1183,829 1201,829 1218,835 1234,835 1240,831 1248,820 1257,812 1264,809 1272,812 1285,820 1300,825 1311,834 1323,853 1336,878 1347,903 1357,916 1364,921
1369,920 1381,910 1389,893 1398,872 1407,852 1413,845 1419,843 1426,845 1438,850 1451,852 1456,857 1462,865`;

/* ---- price pane ---- */
const price = plot('pricePlot', 80);

line(price, ma200, '#eee');
line(price, ma50, '#f0f020');
add(price, 'path', { d: 'M1276 134L1633 289', stroke: '#111', 'stroke-width': 1.3 });
add(price, 'path', { d: 'M1248 195.500h329', stroke: '#111', 'stroke-dasharray': '2 1' });

// channel
add(price, 'path', { d: 'M728 314L1488 76V195L728 433z', fill: '#b3a2d6', 'fill-opacity': .5 });
add(price, 'path', { d: 'M728 314L1488 76M1488 195L728 433', stroke: '#8a55a8', 'stroke-width': 1.3 });

add(price, 'path', { d: 'M1488 195.500h89M1317 265.500h251', stroke: '#111', 'stroke-dasharray': '2 1' });
add(price, 'path', { d: 'M785 382.500H1760M988 338.500L1718 336.500', stroke: '#111', 'stroke-dasharray': '1 2', 'stroke-width': 1.4 });
add(price, 'path', { d: 'M1177 195L1630 390', stroke: '#111', 'stroke-width': 1.3 });

// candles
const up = { fill: '#00d20a', stroke: '#14552b' };
const down = { fill: '#f00', stroke: '#660f0f' };
const wicks = add(price, 'g', { stroke: '#fff', 'shape-rendering': 'crispEdges' });
const bodies = add(price, 'g', { 'shape-rendering': 'crispEdges' });
let prev = closes[0][2];
const last = Math.round((1463 - FIRST) / STEP);
for (let i = 0; i <= last; i++) {
  const x = FIRST + i * STEP;
  const exact = closes.find(p => Math.round((p[0] - FIRST) / STEP) === i);
  const close = Math.round(exact ? exact[1] : valueAt(closes, x));
  const open = exact && exact[2] ? exact[2] : prev;
  const y1 = Math.min(open, close), y2 = Math.max(open, close);
  let hi = y1 - 1 - (i * 7 + 3) % 5, lo = y2 + 1 + (i * 11 + 2) % 6;
  const spike = Object.keys(spikes).find(k => Math.round((k - FIRST) / STEP) === i);
  if (spike) {
    hi = Math.min(hi, spikes[spike]);
    lo = Math.max(lo, spikes[spike]);
  }
  add(wicks, 'path', { d: `M${x - .5} ${hi}V${lo}` });
  add(bodies, 'rect', Object.assign({ x: x - 2.5, y: y1 - .5, width: 3, height: Math.max(y2 - y1, 1) }, close <= open ? up : down));
  prev = close;
}

add(price, 'path', { d: 'M59 251.500H1840', stroke: '#00d800', 'stroke-dasharray': '2 1' });

// arrows: tail, neck, tip, barbs
[
  ['1294,109', '1302,128', '1307,139', '1292,129', '1310,120'],
  ['1384,157', '1388,164', '1393,175', '1377,164', '1396,157'],
  ['1441,181', '1445,193', '1447,205', '1434,192', '1453,189'],
  ['1332,294', '1336,285', '1341,273', '1326,282', '1345,290']
].forEach(([tail, neck, tip, a, b]) => {
  const g = add(price, 'g', { class: 'arrow', style: 'filter:drop-shadow(1px 2px 1px rgba(0,0,0,.5))' });
  add(g, 'path', { d: `M${tail}L${neck}`, stroke: '#000', 'stroke-width': 10, 'stroke-linecap': 'round' });
  add(g, 'path', { d: `M${tip}L${a}L${neck}L${b}z`, fill: '#000', stroke: '#000', 'stroke-width': 3, 'stroke-linejoin': 'round' });
});

axis('priceAxis', 80, [[82, '1260.00'], [131, '1250.00'], [180, '1240.00'], [229, '1230.00'], [279, '1220.00'],
  [328, '1210.00'], [377, '1200.00'], [427, '1190.00'], [476, '1180.00'], [525, '1170.00']]);
const tag = document.getElementById('priceAxis');
add(tag, 'rect', { x: 0, y: 164, width: 49, height: 16, fill: '#00e600' });
add(tag, 'path', { d: 'M0 171.500h3', stroke: '#111' });
add(tag, 'text', { x: 6, y: 176, style: 'fill:#111' }, '1225.45');

/* ---- RSI ---- */
const rsiG = plot('rsiPlot', 556);
line(rsiG, rsi, '#eee');
add(rsiG, 'rect', { x: 59, y: 617, width: 1780, height: 78, fill: '#8e6395', 'fill-opacity': .3 });
add(rsiG, 'path', { d: 'M59 617.500H1839M59 695.500H1839', stroke: '#777', 'stroke-dasharray': '4 1' });
axis('rsiAxis', 556, [[558, '100.0000'], [597, '80.0000'], [636, '60.0000'], [675, '40.0000'], [714, '20.0000']]);

/* ---- MACD ---- */
const macdG = plot('macdPlot', 748);
const m = parse(macd), s = parse(signal);
let bars = '';
for (let x = FIRST; x <= 1463; x += STEP) {
  bars += `M${x + .5} 853v${Math.round(valueAt(m, x) - valueAt(s, x))}`;
}
add(macdG, 'path', { d: bars, stroke: '#ddd' });
line(macdG, macd, '#20e4e4');
line(macdG, signal, '#eee');
axis('macdAxis', 748, [[779, '4.0000'], [815, '2.0000'], [852, '0.0000'], [888, '-2.0000'], [924, '-4.0000']]);

/* ---- time axis ---- */
const times = plot('timeAxis', 939);
add(times, 'path', { d: 'M59 940.500H1841', stroke: '#555' });
[[80, '17'], [218, '19'], [359, '23'], [497, '25'], [635, '27'], [740, '12:00'], [845, 'Feb'], [986, '3'],
  [1126, '7'], [1264, '9'], [1405, '13'], [1549, '15'], [1693, '17'], [1783, '06:00']].forEach(([x, t]) => {
  add(times, 'path', { d: `M${x + .5} 941v3`, stroke: '#555' });
  add(times, 'text', { x, y: 955, 'text-anchor': 'middle', style: t === 'Feb' ? 'font-weight:600' : '' }, t);
});
```
